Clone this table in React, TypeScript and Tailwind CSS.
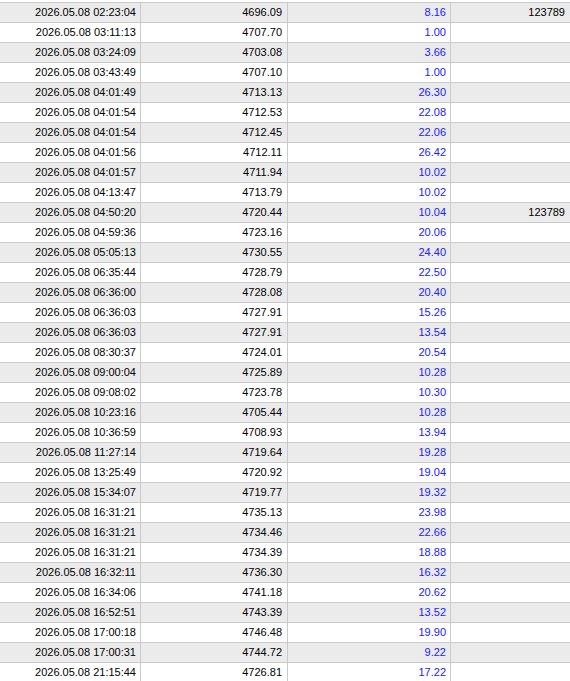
const rows: [string, string, string, string][] = [
  ['02:23:04', '4696.09', '8.16', '123789'],
  ['03:11:13', '4707.70', '1.00', ''],
  ['03:24:09', '4703.08', '3.66', ''],
  ['03:43:49', '4707.10', '1.00', ''],
  ['04:01:49', '4713.13', '26.30', ''],
  ['04:01:54', '4712.53', '22.08', ''],
  ['04:01:54', '4712.45', '22.06', ''],
  ['04:01:56', '4712.11', '26.42', ''],
  ['04:01:57', '4711.94', '10.02', ''],
  ['04:13:47', '4713.79', '10.02', ''],
  ['04:50:20', '4720.44', '10.04', '123789'],
  ['04:59:36', '4723.16', '20.06', ''],
  ['05:05:13', '4730.55', '24.40', ''],
  ['06:35:44', '4728.79', '22.50', ''],
  ['06:36:00', '4728.08', '20.40', ''],
  ['06:36:03', '4727.91', '15.26', ''],
  ['06:36:03', '4727.91', '13.54', ''],
  ['08:30:37', '4724.01', '20.54', ''],
  ['09:00:04', '4725.89', '10.28', ''],
  ['09:08:02', '4723.78', '10.30', ''],
  ['10:23:16', '4705.44', '10.28', ''],
  ['10:36:59', '4708.93', '13.94', ''],
  ['11:27:14', '4719.64', '19.28', ''],
  ['13:25:49', '4720.92', '19.04', ''],
  ['15:34:07', '4719.77', '19.32', ''],
  ['16:31:21', '4735.13', '23.98', ''],
  ['16:31:21', '4734.46', '22.66', ''],
  ['16:31:21', '4734.39', '18.88', ''],
  ['16:32:11', '4736.30', '16.32', ''],
  ['16:34:06', '4741.18', '20.62', ''],
  ['16:52:51', '4743.39', '13.52', ''],
  ['17:00:18', '4746.48', '19.90', ''],
  ['17:00:31', '4744.72', '9.22', ''],
  ['21:15:44', '4726.81', '17.22', ''],
];

const App = () => {
  return (
    <div className="w-[570px] h-[681px] overflow-hidden bg-white pt-[2px] font-['Liberation_Sans',sans-serif] text-[11px] leading-none">
      {rows.map(([time, price, value, id], i) => (
        <div
          key={i}
          className={`flex h-[20px] border-t border-[#cacaca] ${i % 2 === 0 ? 'bg-[#ebebeb]' : 'bg-white'}`}
        >
          <div className="w-[141px] shrink-0 flex items-center justify-end pr-[4px] border-r border-[#cacaca] text-black">
            2026.05.08 {time}
          </div>
          <div className="w-[147px] shrink-0 flex items-center justify-end pr-[5px] border-r border-[#cacaca] text-black">
            {price}
          </div>
          <div className="w-[163px] shrink-0 flex items-center justify-end pr-[4px] border-r border-[#cacaca] text-[#2020ff]">
            {value}
          </div>
          <div className="flex-1 flex items-center justify-end pr-[5px] text-black">
            {id}
          </div>
        </div>
      ))}
    </div>
  );
};

export default App;
